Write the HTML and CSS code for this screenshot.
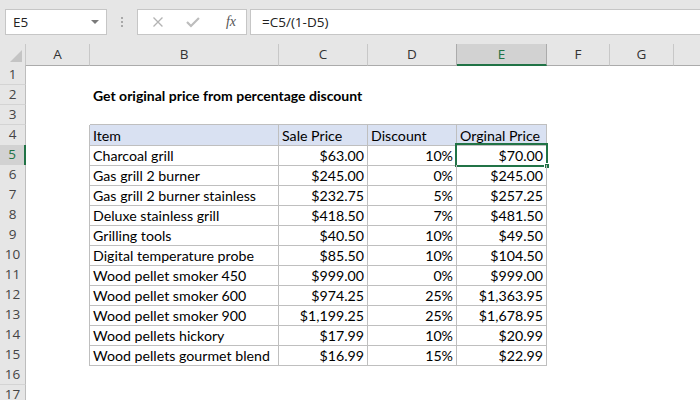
FILE: index.html
```html
<!DOCTYPE html>
<html>
<head>
<meta charset="utf-8">
<link rel="stylesheet" href="styles.css">
</head>
<body>
<div class="toolbar">
  <div class="namebox"><span>E5</span><span class="drop"></span></div>
  <div class="grip"><i></i><i></i><i></i></div>
  <div class="fxbox">
    <svg class="ico" width="12" height="12" viewBox="0 0 12 12"><path d="M1.5 1.5 L10.5 10.5 M10.5 1.5 L1.5 10.5" stroke="#b3b3b3" stroke-width="1.3" fill="none"/></svg>
    <svg class="ico" width="14" height="12" viewBox="0 0 14 12"><path d="M1 6 L5 10 L13 2" stroke="#bdbdbd" stroke-width="2.2" fill="none"/></svg>
    <span class="fx">fx</span>
  </div>
  <div class="formula">=C5/(1-D5)</div>
</div>

<div class="sheet">
  <div class="grid colhead">
    <div class="ch corner"><svg width="12" height="12" viewBox="0 0 12 12"><path d="M12 0 L12 12 L0 12 Z" fill="#c4c4c4"/></svg></div>
    <div class="ch">A</div><div class="ch">B</div><div class="ch">C</div><div class="ch">D</div>
    <div class="ch sel">E</div><div class="ch">F</div><div class="ch">G</div><div class="ch last"></div>
  </div>

  <div class="grid row"><div class="rh">1</div><div class="c"></div><div class="c"></div><div class="c"></div><div class="c"></div><div class="c"></div><div class="c"></div><div class="c"></div><div class="c"></div></div>
  <div class="grid row"><div class="rh">2</div><div class="c"></div><div class="c title">Get original price from percentage discount</div><div class="c"></div><div class="c"></div><div class="c"></div><div class="c"></div><div class="c"></div><div class="c"></div></div>
  <div class="grid row"><div class="rh">3</div><div class="c"></div><div class="c top"></div><div class="c top"></div><div class="c top"></div><div class="c top"></div><div class="c"></div><div class="c"></div><div class="c"></div></div>
  <div class="grid row"><div class="rh">4</div><div class="c edge"></div><div class="c t th">Item</div><div class="c t th">Sale Price</div><div class="c t th">Discount</div><div class="c t th">Orginal Price</div><div class="c"></div><div class="c"></div><div class="c"></div></div>
  <div class="grid row"><div class="rh rsel">5</div><div class="c edge"></div><div class="c t">Charcoal grill</div><div class="c t n">$63.00</div><div class="c t n">10%</div><div class="c t n active">$70.00<span class="selbox"><span class="handle"></span></span></div><div class="c"></div><div class="c"></div><div class="c"></div></div>
  <div class="grid row"><div class="rh">6</div><div class="c edge"></div><div class="c t">Gas grill 2 burner</div><div class="c t n">$245.00</div><div class="c t n">0%</div><div class="c t n">$245.00</div><div class="c"></div><div class="c"></div><div class="c"></div></div>
  <div class="grid row"><div class="rh">7</div><div class="c edge"></div><div class="c t">Gas grill 2 burner stainless</div><div class="c t n">$232.75</div><div class="c t n">5%</div><div class="c t n">$257.25</div><div class="c"></div><div class="c"></div><div class="c"></div></div>
  <div class="grid row"><div class="rh">8</div><div class="c edge"></div><div class="c t">Deluxe stainless grill</div><div class="c t n">$418.50</div><div class="c t n">7%</div><div class="c t n">$481.50</div><div class="c"></div><div class="c"></div><div class="c"></div></div>
  <div class="grid row"><div class="rh">9</div><div class="c edge"></div><div class="c t">Grilling tools</div><div class="c t n">$40.50</div><div class="c t n">10%</div><div class="c t n">$49.50</div><div class="c"></div><div class="c"></div><div class="c"></div></div>
  <div class="grid row"><div class="rh">10</div><div class="c edge"></div><div class="c t">Digital temperature probe</div><div class="c t n">$85.50</div><div class="c t n">10%</div><div class="c t n">$104.50</div><div class="c"></div><div class="c"></div><div class="c"></div></div>
  <div class="grid row"><div class="rh">11</div><div class="c edge"></div><div class="c t">Wood pellet smoker 450</div><div class="c t n">$999.00</div><div class="c t n">0%</div><div class="c t n">$999.00</div><div class="c"></div><div class="c"></div><div class="c"></div></div>
  <div class="grid row"><div class="rh">12</div><div class="c edge"></div><div class="c t">Wood pellet smoker 600</div><div class="c t n">$974.25</div><div class="c t n">25%</div><div class="c t n">$1,363.95</div><div class="c"></div><div class="c"></div><div class="c"></div></div>
  <div class="grid row"><div class="rh">13</div><div class="c edge"></div><div class="c t">Wood pellet smoker 900</div><div class="c t n">$1,199.25</div><div class="c t n">25%</div><div class="c t n">$1,678.95</div><div class="c"></div><div class="c"></div><div class="c"></div></div>
  <div class="grid row"><div class="rh">14</div><div class="c edge"></div><div class="c t">Wood pellets hickory</div><div class="c t n">$17.99</div><div class="c t n">10%</div><div class="c t n">$20.99</div><div class="c"></div><div class="c"></div><div class="c"></div></div>
  <div class="grid row"><div class="rh">15</div><div class="c edge"></div><div class="c t">Wood pellets gourmet blend</div><div class="c t n">$16.99</div><div class="c t n">15%</div><div class="c t n">$22.99</div><div class="c"></div><div class="c"></div><div class="c"></div></div>
  <div class="grid row"><div class="rh">16</div><div class="c"></div><div class="c"></div><div class="c"></div><div class="c"></div><div class="c"></div><div class="c"></div><div class="c"></div><div class="c"></div></div>
  <div class="grid row"><div class="rh">17</div><div class="c"></div><div class="c"></div><div class="c"></div><div class="c"></div><div class="c"></div><div class="c"></div><div class="c"></div><div class="c"></div></div>
</div>
</body>
</html>
```

FILE: styles.css
```css
* { box-sizing: border-box; margin: 0; padding: 0; }
html, body { width: 700px; height: 400px; overflow: hidden; }
body { margin: 0; background: #fff; font-family: "Open Sans", "DejaVu Sans", sans-serif; color: #000; }

.toolbar {
  height: 44px;
  background: #e6e6e6;
  display: flex;
  align-items: flex-start;
  padding: 9px 0 0 5px;
}
.namebox {
  width: 102px;
  height: 26px;
  background: #fff;
  border: 1px solid #c6c6c6;
  display: flex;
  align-items: center;
  justify-content: space-between;
  padding: 0 7px 0 7px;
  font-size: 13.5px;
  color: #222;
}
.drop {
  width: 0; height: 0;
  border-left: 4px solid transparent;
  border-right: 4px solid transparent;
  border-top: 4px solid #7a7a7a;
}
.grip {
  width: 30px;
  height: 26px;
  display: flex;
  flex-direction: column;
  align-items: center;
  justify-content: center;
  gap: 2px;
}
.grip i { display: block; width: 2px; height: 2px; background: #a8a8a8; }
.fxbox {
  width: 110px;
  height: 26px;
  background: #fff;
  border: 1px solid #c6c6c6;
  display: flex;
  align-items: center;
  padding: 0 10px 0 14px;
  gap: 22px;
}
.fxbox .ico { display: block; }
.fx {
  margin-left: 4px;
  font-family: "Liberation Serif", serif;
  font-style: italic;
  font-size: 14px;
  color: #555;
}
.formula {
  flex: 1;
  margin-left: 3px;
  height: 26px;
  background: #fff;
  border: 1px solid #c6c6c6;
  border-right: 0;
  padding-left: 11px;
  font-size: 13.5px;
  line-height: 24px;
  color: #222;
}

.grid {
  display: grid;
  grid-template-columns: 26px 64px 189px 89px 89px 90px 63px 64px 1fr;
}
.colhead { height: 21px; background: #e6e6e6; }
.ch {
  border-right: 1px solid #c8c8c8;
  border-bottom: 1px solid #ababab;
  text-align: center;
  font-size: 13.5px;
  line-height: 20px;
  color: #333;
}
.ch.last { border-right: 0; }
.ch.corner { display: flex; align-items: flex-end; justify-content: flex-end; padding: 0 3px 3px 0; }
.ch.corner svg { display: block; }
.ch.sel {
  background: #d2d2d2;
  border-right: 1px solid #ababab;
  border-bottom: 2px solid #217346;
  color: #217346;
}
.ch:nth-child(5) { border-right-color: #ababab; }

.row { height: 20px; }
.rh {
  background: #e6e6e6;
  border-right: 1px solid #bdbdbd;
  border-bottom: 1px solid #d4d4d4;
  text-align: center;
  font-size: 13.5px;
  line-height: 19px;
  color: #444;
}
.rh.rsel {
  background: #d2d2d2;
  border-right: 2px solid #217346;
  color: #217346;
}
.c {
  position: relative;
  font-family: "Lato", "Liberation Sans", sans-serif;
  font-size: 14.2px;
  line-height: 19px;
  padding: 1px 3px 0 3px;
  white-space: nowrap;
}
.title { font-weight: bold; font-size: 14px; }
.top { border-bottom: 1px solid #bfbfbf; }
.edge { border-right: 1px solid #bfbfbf; }
.t { border-right: 1px solid #bfbfbf; border-bottom: 1px solid #bfbfbf; }
.th { background: #d9e1f2; }
.n { text-align: right; }
.selbox {
  position: absolute;
  left: -2px; top: -2px; right: -2px; bottom: -2px;
  border: 2px solid #217346;
}
.handle {
  position: absolute;
  right: -4px; bottom: -4px;
  width: 6px; height: 6px;
  background: #217346;
  border: 1px solid #fff;
}
```
